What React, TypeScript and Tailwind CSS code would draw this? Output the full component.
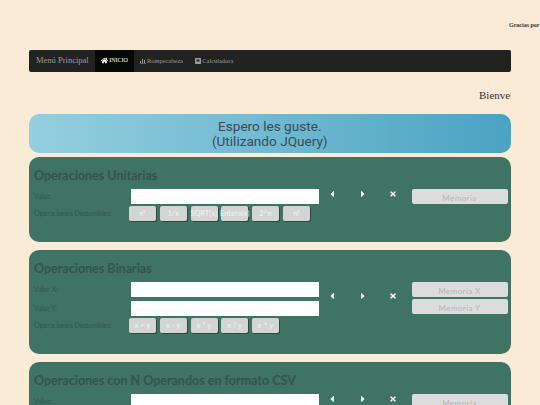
import { FaCaretLeft, FaCaretRight, FaHome, FaTimes } from "react-icons/fa";

type PanelProps = {
  title: string;
  height: string;
  inputs: string[];
  ops?: string[];
  memory: string[];
};

const sans = "font-['Lato','Noto_Sans',sans-serif]";
const serif = "font-['Liberation_Serif',serif]";

function OpButton({ label }: { label: string }) {
  return (
    <button className="flex h-[15px] w-[27px] items-center justify-center overflow-visible whitespace-nowrap rounded-[2px] bg-[#d3d5d5] text-[7px] tracking-[0.2px] text-[#f4f4f4] shadow-[1px_1px_0_#2c4a42]">
      {label}
    </button>
  );
}

function Panel({ title, height, inputs, ops, memory }: PanelProps) {
  return (
    <section className={`mb-[8px] rounded-[10px] bg-[#3f7364] pl-[5px] pr-[3px] pt-[11px] ${sans} ${height}`}>
      <h2 className="text-[12.5px] font-bold leading-[16px] text-[#33544d]">{title}</h2>
      <div className="mt-[5px] flex">
        <div className="w-[285px]">
          {inputs.map((label) => (
            <div key={label} className="mb-[4.5px] flex h-[14.5px] items-center">
              <span className="w-[97px] text-[7px] text-[#33594f]">{label}</span>
              <div className="h-full w-[188px] bg-white" />
            </div>
          ))}
          {ops && (
            <div className="-mt-[2.5px] flex h-[15px] items-center">
              <span className="w-[95px] whitespace-nowrap text-[7px] text-[#33594f]">Operaciones Disponibles:</span>
              <div className="flex gap-[3.75px]">
                {ops.map((op) => (
                  <OpButton key={op} label={op} />
                ))}
              </div>
            </div>
          )}
        </div>
        <div className={`ml-[7.5px] flex w-[85px] items-center text-white ${inputs.length > 1 ? "h-[28px]" : "h-[10px]"}`}>
          <span className="w-[31px]"><FaCaretLeft size={10} /></span>
          <span className="w-[31px]"><FaCaretRight size={10} /></span>
          <FaTimes size={8} />
        </div>
        <div className="flex w-[96px] flex-col gap-[2px]">
          {memory.map((label) => (
            <div
              key={label}
              className="flex h-[15px] items-end justify-center rounded-[2px] bg-[#dcdcdc] text-[8px] leading-[11px] tracking-[0.4px] text-[#b5b5b5]"
            >
              {label}
            </div>
          ))}
        </div>
      </div>
    </section>
  );
}

export default function App() {
  return (
    <div className="h-[405px] w-[540px] overflow-hidden bg-[#faebd7]">
      <p className={`overflow-hidden whitespace-nowrap pl-[509px] pt-[21px] text-[6px] font-bold leading-[9px] text-[#333] ${serif}`}>
        Gracias por su visita
      </p>
      <div className="ml-[29px] w-[481.5px]">
        <nav className={`mt-[19.5px] flex h-[22px] items-stretch rounded-[2px] bg-[#222] ${serif}`}>
          <span className="flex w-[66px] items-center pl-[7px] text-[8.5px] text-[#9d9d9d]">Menú Principal</span>
          <span className="flex w-[39px] items-center justify-center gap-[1px] bg-[#080808] text-[6px] text-white">
            <FaHome size={7} />
            INICIO
          </span>
          <span className="flex items-center gap-[1px] pl-[6px] text-[6.4px] text-[#9d9d9d]">
            <svg width="6" height="6" viewBox="0 0 6 6" fill="currentColor">
              <path d="M0 3h1v2H0zM2 1h1v4H2zM4 2h1v3H4zM0 5.4h6V6H0z" />
            </svg>
            Rompecabeza
          </span>
          <span className="flex items-center gap-[1.5px] pl-[12px] text-[6.4px] text-[#9d9d9d]">
            <svg width="6" height="6" viewBox="0 0 6 6" fill="currentColor">
              <path fillRule="evenodd" d="M.6 0h4.8l.6.6v4.8l-.6.6H.6L0 5.4V.6zM1.5 1.5v2h3v-2z" />
            </svg>
            Calculadora
          </span>
        </nav>
        <p className={`overflow-hidden whitespace-nowrap pl-[450px] pt-[16px] text-[11px] leading-[14px] text-[#333] ${serif}`}>
          Bienvenido a la calculadora
        </p>
        <header className="mb-[4px] mt-[12.5px] flex h-[39px] flex-col items-center justify-center rounded-[10px] bg-gradient-to-r from-[#94cfe0] to-[#4aa3c2] font-['Roboto',sans-serif] text-[13.6px] leading-[14.5px] text-[#3b4a56]">
          <span>Espero les guste.</span>
          <span>(Utilizando JQuery)</span>
        </header>
        <Panel
          title="Operaciones Unitarias"
          height="h-[85px]"
          inputs={["Valor:"]}
          ops={["x²", "1/x", "SQRT(x)", "Entero(x)", "2^n", "n!"]}
          memory={["Memoria"]}
        />
        <Panel
          title="Operaciones Binarias"
          height="h-[104px]"
          inputs={["Valor X:", "Valor Y:"]}
          ops={["x + y", "x - y", "x * y", "x / y", "x ^ y"]}
          memory={["Memoria X", "Memoria Y"]}
        />
        <Panel
          title="Operaciones con N Operandos en formato CSV"
          height="h-[80px]"
          inputs={["Valor:"]}
          memory={["Memoria"]}
        />
      </div>
    </div>
  );
}
